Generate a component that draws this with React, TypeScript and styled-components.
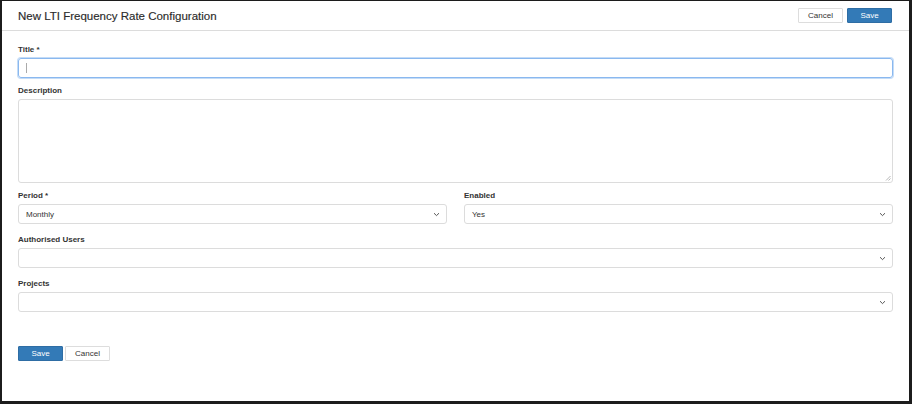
import styled, { createGlobalStyle } from 'styled-components';

const GlobalStyle = createGlobalStyle`
  html, body {
    margin: 0;
    padding: 0;
    background: #ffffff;
  }
  body {
    font-family: "Liberation Sans", Arial, sans-serif;
    color: #333333;
  }
`;

/** style Start */
const Frame = styled.div`
  box-sizing: border-box;
  width: 912px;
  height: 404px;
  border-style: solid;
  border-color: #1c1c1c;
  border-width: 1px 3px 3px 2px;
  background: #ffffff;
  display: flex;
  flex-direction: column;
`;

const Header = styled.header`
  height: 29px;
  display: flex;
  align-items: center;
  justify-content: space-between;
  padding: 0 17px 0 16px;
  border-bottom: 1px solid #dcdcdc;
`;

const Title = styled.h1`
  margin: 0;
  font-size: 11.5px;
  font-weight: normal;
  color: #2b2b2b;
  -webkit-text-stroke: 0.15px #2b2b2b;
`;

const Actions = styled.div`
  display: flex;
  gap: 4px;
`;

const Button = styled.button<{ $primary?: boolean }>`
  box-sizing: border-box;
  height: 15px;
  width: 45px;
  padding: 0;
  font-family: "Liberation Sans", Arial, sans-serif;
  font-size: 8px;
  border-radius: 1px;
  border: 1px solid ${(p) => (p.$primary ? '#2e6da4' : '#dddddd')};
  background: ${(p) => (p.$primary ? '#337ab7' : '#ffffff')};
  color: ${(p) => (p.$primary ? '#ffffff' : '#333333')};
`;

const Form = styled.form`
  padding: 14px 16px 0 16px;
  display: flex;
  flex-direction: column;
`;

const Field = styled.div<{ $gap?: number }>`
  display: flex;
  flex-direction: column;
  margin-bottom: ${(p) => p.$gap ?? 11}px;
  flex: 1;
`;

const Row = styled.div`
  display: flex;
  gap: 17px;
`;

const Label = styled.label`
  font-size: 8px;
  font-weight: bold;
  color: #333;
  height: 9px;
  line-height: 9px;
  margin-bottom: 4px;
`;

const TextInput = styled.div<{ $focus?: boolean }>`
  box-sizing: border-box;
  height: 20px;
  border-radius: 3px;
  border: 1px solid ${(p) => (p.$focus ? '#8ab8ef' : '#dcdcdc')};
  box-shadow: ${(p) => (p.$focus ? '0 0 0 1px #c4dcf7' : 'none')};
  display: flex;
  align-items: center;
  padding-left: 7px;
`;

const Caret = styled.span`
  width: 1px;
  height: 10px;
  background: #aaa;
`;

const TextArea = styled.div`
  position: relative;
  box-sizing: border-box;
  height: 84px;
  border-radius: 3px;
  border: 1px solid #dcdcdc;
`;

const Grip = styled.svg`
  position: absolute;
  right: 1px;
  bottom: 1px;
`;

const Select = styled.div`
  box-sizing: border-box;
  height: 20px;
  border-radius: 3px;
  border: 1px solid #dcdcdc;
  display: flex;
  align-items: center;
  justify-content: space-between;
  padding: 0 6px 0 7px;
  font-size: 8px;
  color: #333;
`;

const Footer = styled.div`
  display: flex;
  gap: 2px;
  margin-top: 23px;
  padding-left: 16px;
`;
/** style End */

const Chevron = () => (
  <svg width="7" height="5" viewBox="0 0 7 5">
    <path d="M1 1.2 L3.5 3.6 L6 1.2" fill="none" stroke="#444" strokeWidth="0.9" />
  </svg>
);

function App() {
  return (
    <>
      <GlobalStyle />
      <Frame>
        <Header>
          <Title>New LTI Frequency Rate Configuration</Title>
          <Actions>
            <Button type="button">Cancel</Button>
            <Button type="button" $primary>
              Save
            </Button>
          </Actions>
        </Header>

        <Form>
          <Field $gap={8}>
            <Label>Title *</Label>
            <TextInput $focus>
              <Caret />
            </TextInput>
          </Field>

          <Field $gap={8}>
            <Label>Description</Label>
            <TextArea>
              <Grip width="6" height="6" viewBox="0 0 6 6">
                <path d="M5.5 1 L1 5.5 M5.5 3.5 L3.5 5.5" stroke="#999" strokeWidth="0.7" />
              </Grip>
            </TextArea>
          </Field>

          <Row>
            <Field>
              <Label>Period *</Label>
              <Select>
                Monthly
                <Chevron />
              </Select>
            </Field>
            <Field>
              <Label>Enabled</Label>
              <Select>
                Yes
                <Chevron />
              </Select>
            </Field>
          </Row>

          <Field>
            <Label>Authorised Users</Label>
            <Select>
              <span />
              <Chevron />
            </Select>
          </Field>

          <Field>
            <Label>Projects</Label>
            <Select>
              <span />
              <Chevron />
            </Select>
          </Field>
        </Form>

        <Footer>
          <Button type="button" $primary>
            Save
          </Button>
          <Button type="button">Cancel</Button>
        </Footer>
      </Frame>
    </>
  );
}

export default App;
